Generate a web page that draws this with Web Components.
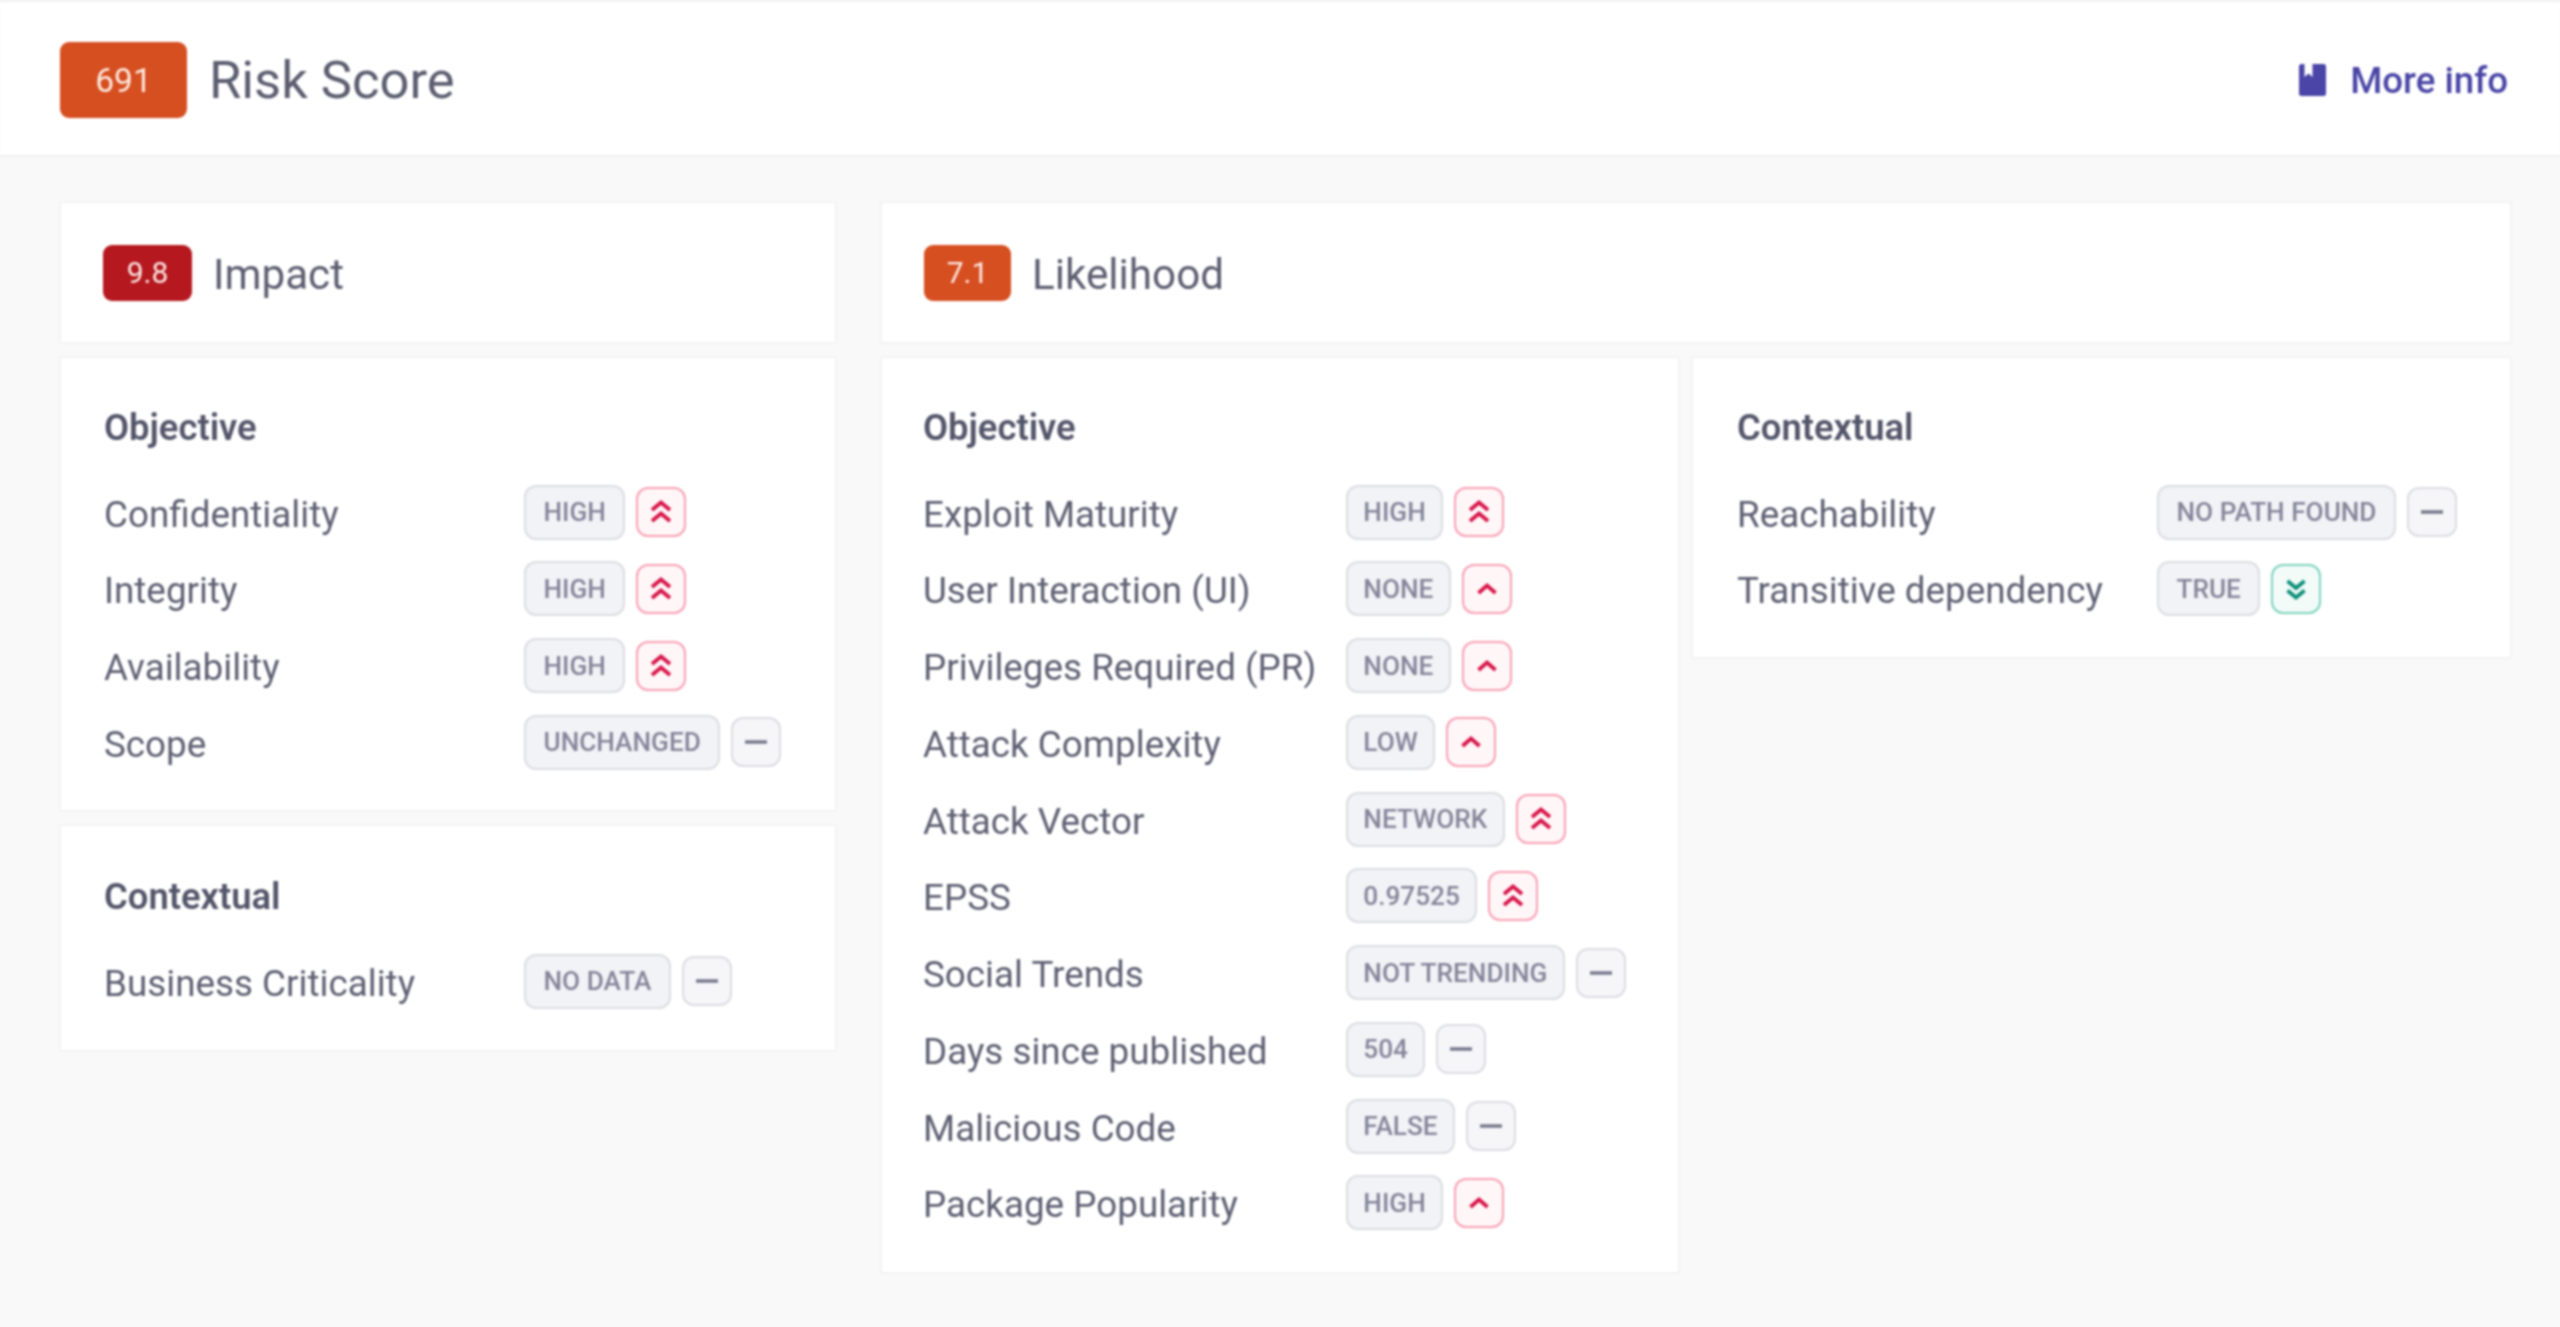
<!DOCTYPE html>
<html lang="en"><head><meta charset="utf-8"><title>Risk Score</title>
<style>
html,body{margin:0;padding:0;background:#f9f9f9;}
body{font-family:Roboto,"Liberation Sans",sans-serif;color:#5e5f72;}
</style></head><body>
<risk-app>
  <risk-header slot="header" score="691"></risk-header>
  <div slot="left" style="display:contents">
    <title-card score="9.8" tone="red" label="Impact"></title-card>
    <factor-section heading="Objective" style="padding-bottom:39.75px;">
      <factor-row label="Confidentiality" value="HIGH" trend="up2"></factor-row>
      <factor-row label="Integrity" value="HIGH" trend="up2"></factor-row>
      <factor-row label="Availability" value="HIGH" trend="up2"></factor-row>
      <factor-row label="Scope" value="UNCHANGED" trend="flat"></factor-row>
    </factor-section>
    <factor-section heading="Contextual" style="padding-top:47.5px;">
      <factor-row label="Business Criticality" value="NO DATA" trend="flat"></factor-row>
    </factor-section>
  </div>
  <div slot="right" style="display:contents">
    <title-card score="7.1" tone="orange" label="Likelihood"></title-card>
    <split-row>
      <factor-section heading="Objective" style="padding-left:41px;padding-bottom:41.75px;--pill-pad:15.5px;--key-gap:29.5px;">
        <factor-row label="Exploit Maturity" value="HIGH" trend="up2"></factor-row>
        <factor-row label="User Interaction (UI)" value="NONE" trend="up1"></factor-row>
        <factor-row label="Privileges Required (PR)" value="NONE" trend="up1"></factor-row>
        <factor-row label="Attack Complexity" value="LOW" trend="up1"></factor-row>
        <factor-row label="Attack Vector" value="NETWORK" trend="up2"></factor-row>
        <factor-row label="EPSS" value="0.97525" trend="up2"></factor-row>
        <factor-row label="Social Trends" value="NOT TRENDING" trend="flat"></factor-row>
        <factor-row label="Days since published" value="504" trend="flat"></factor-row>
        <factor-row label="Malicious Code" value="FALSE" trend="flat"></factor-row>
        <factor-row label="Package Popularity" value="HIGH" trend="up1"></factor-row>
      </factor-section>
      <factor-section heading="Contextual" style="padding-left:44px;padding-bottom:40.75px;">
        <factor-row label="Reachability" value="NO PATH FOUND" trend="flat"></factor-row>
        <factor-row label="Transitive dependency" value="TRUE" trend="down2"></factor-row>
      </factor-section>
    </split-row>
  </div>
</risk-app>
<script>
function define(name, css, html){
  customElements.define(name, class extends HTMLElement{
    connectedCallback(){
      if(this.shadowRoot) return;
      const r=this.attachShadow({mode:'open'});
      const get=a=>this.getAttribute(a)||'';
      r.innerHTML='<style>'+css+'</style>'+html(get);
    }
  });
}
define('risk-app',`
  :host{display:block;min-height:1327px;box-sizing:border-box;border-top:2px solid #efeff1;background:#f9f9f9;filter:blur(.8px);}
  .main{display:grid;grid-template-columns:778px 1632px;column-gap:43px;padding:44px 48px 36px 59px;align-items:start;}
  .col{display:flex;flex-direction:column;gap:12px;min-width:0;}
`,()=>`<slot name="header"></slot><div class="main"><div class="col"><slot name="left"></slot></div><div class="col"><slot name="right"></slot></div></div>`);

define('risk-header',`
  :host{display:flex;align-items:center;justify-content:space-between;height:155px;box-sizing:border-box;background:#fff;border-bottom:2px solid #f0f0f2;padding:3px 52px 0 60px;}
  .l{display:flex;align-items:center;gap:22px;}
  .b{width:127px;height:76px;border-radius:9px;background:#d64f21;color:#fde9df;display:flex;align-items:center;justify-content:center;font-size:33.5px;}
  .t{font-size:52.5px;color:#5c5d70;}
  a{display:flex;align-items:center;gap:24px;color:#4a45a6;font-size:36.7px;font-weight:500;text-decoration:none;}
  svg{width:27px;height:32px;display:block;}
`,g=>`<div class="l"><span class="b">${g('score')}</span><span class="t">Risk Score</span></div>
<a href="#"><svg viewBox="0 0 27 32"><path fill="#4a45a6" d="M2.5 0H5.5V13L9.5 9.6L13.5 13V0H24.5A2.5 2.5 0 0 1 27 2.5V29.5A2.5 2.5 0 0 1 24.5 32H2.5A2.5 2.5 0 0 1 0 29.5V2.5A2.5 2.5 0 0 1 2.5 0Z"/></svg>More info</a>`);

define('title-card',`
  :host{display:flex;align-items:center;gap:21px;height:143px;box-sizing:border-box;background:#fff;border:2px solid #f3f3f5;border-radius:3px;padding:0 42px;}
  .b{height:56px;border-radius:9px;display:flex;align-items:center;justify-content:center;font-size:30px;color:#fde8e4;}
  .red{background:#b5191f;width:89px;}.orange{background:#d64f21;width:87px;}
  .t{font-size:42.2px;color:#5c5d70;margin-top:3px;}
`,g=>`<span class="b ${g('tone')}">${g('score')}</span><span class="t">${g('label')}</span>`);

define('split-row',`
  :host{display:grid;grid-template-columns:800px 821px;column-gap:11px;align-items:start;}
`,()=>`<slot></slot>`);

define('factor-section',`
  :host{display:block;box-sizing:border-box;background:#fff;border:2px solid #f3f3f5;border-radius:3px;padding:46px 30px 41px 43px;margin-top:0;}
  h3{margin:0 0 32.5px;font-size:36.4px;line-height:48px;font-weight:600;color:#54556a;}
  .rows{display:grid;grid-template-columns:auto 1fr;row-gap:21.75px;}
`,g=>`<h3>${g('heading')}</h3><div class="rows"><slot></slot></div>`);

const icons={
  up2:'<path d="M14 21L23 13.5L32 21M14 32L23 24.5L32 32"/>',
  up1:'<path d="M14.5 27L23 19.5L31.5 27"/>',
  flat:'<path d="M12 23H34" style="stroke-width:3.4"/>',
  down2:'<path d="M14.5 15L23 22L31.5 15M14.5 24.5L23 31.5L31.5 24.5"/>'
};
define('factor-row',`
  :host{display:grid;grid-template-columns:subgrid;grid-column:1 / -1;align-items:center;}
  .k{font-size:36.8px;color:#5e5f72;min-width:420px;box-sizing:border-box;padding-right:var(--key-gap,30px);white-space:nowrap;position:relative;top:2px;}
  .v{display:flex;align-items:center;gap:11px;}
  .p{height:55px;box-sizing:border-box;border:2px solid #dcdde2;background:#f2f3f6;border-radius:12px;padding:0 var(--pill-pad,17.5px);display:flex;align-items:center;font-size:26.2px;font-weight:500;color:#84859a;white-space:nowrap;}
  .i{width:50px;height:50px;box-sizing:border-box;border-radius:12px;border:2px solid #dcdde2;background:#f6f6f9;display:flex;align-items:center;justify-content:center;}
  .i svg{width:46px;height:46px;fill:none;stroke:#75768a;stroke-width:3.8;}
  .up2 ,.up1{border-color:#f8a0b4;background:#fff6f8;}
  .up2 svg,.up1 svg{stroke:#d8174a;}
  .down2{border-color:#7fd3bd;background:#f3fbf9;}
  .down2 svg{stroke:#0f9079;}
`,g=>`<span class="k">${g('label')}</span><span class="v"><span class="p">${g('value')}</span><span class="i ${g('trend')}"><svg viewBox="0 0 46 46">${icons[g('trend')]}</svg></span></span>`);
</script>
</body></html>
